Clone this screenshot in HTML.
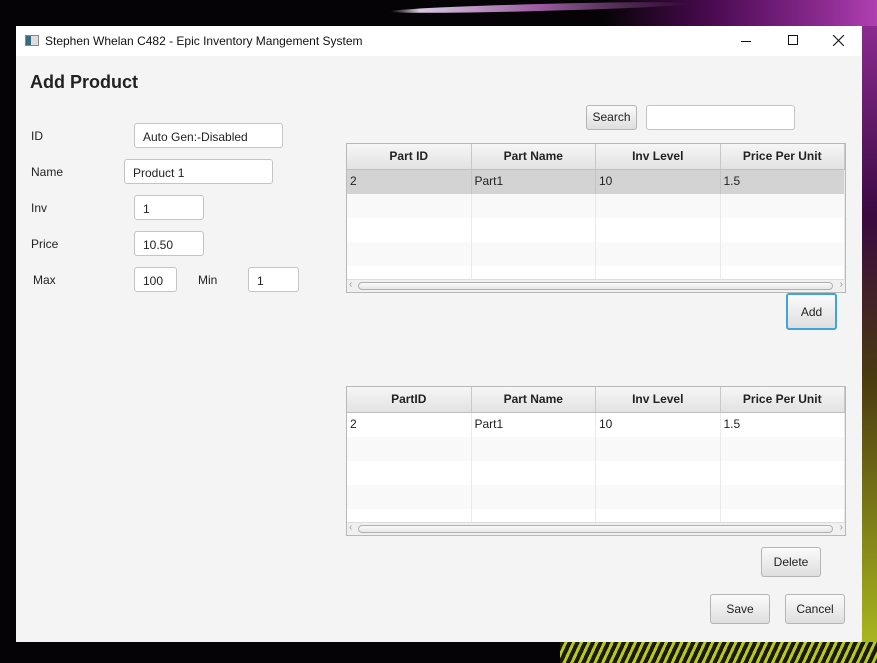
<!DOCTYPE html>
<html><head><style>
*{box-sizing:border-box;margin:0;padding:0}
body{width:877px;height:663px;overflow:hidden;background:#050305;position:relative;font-family:"Liberation Sans",sans-serif;font-size:12px;color:#222}
.bg1{position:absolute;left:390px;top:4px;width:300px;height:7px;background:linear-gradient(90deg,transparent,#d8c8e0 10%,#9a5aa0 50%,transparent);border-radius:50%;transform:rotate(-1.5deg)}
.bg1b{position:absolute;left:600px;top:0;width:277px;height:26px;background:linear-gradient(90deg,transparent,#4a0a50 40%,#8a2a90 80%,#b040b0)}
.bg2{position:absolute;left:862px;top:26px;width:15px;height:637px;background:linear-gradient(180deg,#8a2a90,#3a0a40 30%,#4a3a10 55%,#b0c020)}
.bg3{position:absolute;left:560px;top:642px;width:317px;height:21px;background:repeating-linear-gradient(115deg,#1a1a05 0 4px,#b8c820 4px 7px)}
.win{position:absolute;left:16px;top:26px;width:846px;height:616px;background:#f4f4f4}
.tb{position:absolute;left:0;top:0;width:846px;height:30px;background:#fff;font-size:12px;color:#111}
.abs{position:absolute}
.in{position:absolute;background:#fff;border:1px solid #c4c4c4;border-radius:3px;height:25px;padding:6px 8px;font-size:12px}
.lbl{position:absolute;font-size:12px}
.btn{position:absolute;border:1px solid #b5b5b5;border-radius:3px;background:linear-gradient(#fbfbfb,#dedede);text-align:center;font-size:12px}
.tbl{position:absolute;left:330px;width:500px;height:150px;border:1px solid #b8b8b8;background:#fff;overflow:hidden}
.hd{display:flex;height:26px;background:linear-gradient(#f6f6f6,#e2e2e2);border-bottom:1px solid #c0c0c0}
.hd div{width:125px;border-right:1px solid #c8c8c8;text-align:center;font-weight:bold;line-height:25px;font-size:12px}
.r{display:flex;height:24px}
.r div{width:125px;border-right:1px solid #eaeaea;padding-left:3px;line-height:23px}
.r.alt{background:#f9f9f9}
.sb{position:absolute;left:0;bottom:0;width:100%;height:13px;background:#f0f0f0;border-top:1px solid #ddd}
.sb i{position:absolute;left:11px;right:12px;top:2px;height:8px;border:1px solid #b0b0b0;border-radius:4px;background:linear-gradient(#fafafa,#e6e6e6)}
.sb b{position:absolute;top:-1px;font-weight:normal;color:#999;font-size:10px}
</style></head><body>
<div class="bg1b"></div><div class="bg1"></div><div class="bg2"></div><div class="bg3"></div>
<div class="win">
 <div class="tb">
  <div class="abs" style="left:9px;top:9px;width:14px;height:11px;border:1px solid #888;background:linear-gradient(90deg,#3a6a80 40%,#ddd 40%)"></div>
  <div class="abs" style="left:29px;top:8px">Stephen Whelan C482 - Epic Inventory Mangement System</div>
  <div class="abs" style="left:725px;top:15px;width:10px;height:1px;background:#111"></div>
  <div class="abs" style="left:772px;top:9px;width:10px;height:10px;border:1px solid #111"></div>
  <svg class="abs" style="left:817px;top:9px" width="11" height="11"><path d="M0 0L11 11M11 0L0 11" stroke="#111" stroke-width="1.1"/></svg>
 </div>
 <div class="abs" style="left:14px;top:46px;font-size:18px;font-weight:bold;color:#222">Add Product</div>
 <div class="lbl" style="left:15px;top:103px">ID</div>
 <div class="in" style="left:118px;top:97px;width:149px">Auto Gen:-Disabled</div>
 <div class="lbl" style="left:15px;top:139px">Name</div>
 <div class="in" style="left:108px;top:133px;width:149px">Product 1</div>
 <div class="lbl" style="left:15px;top:175px">Inv</div>
 <div class="in" style="left:118px;top:169px;width:70px">1</div>
 <div class="lbl" style="left:15px;top:211px">Price</div>
 <div class="in" style="left:118px;top:205px;width:70px">10.50</div>
 <div class="lbl" style="left:17px;top:247px">Max</div>
 <div class="in" style="left:118px;top:241px;width:43px">100</div>
 <div class="lbl" style="left:182px;top:247px">Min</div>
 <div class="in" style="left:232px;top:241px;width:51px">1</div>
 <div class="btn" style="left:570px;top:79px;width:51px;height:25px;line-height:23px">Search</div>
 <div class="in" style="left:630px;top:79px;width:149px"></div>
 <div class="tbl" style="top:117px">
  <div class="hd"><div>Part ID</div><div>Part Name</div><div>Inv Level</div><div>Price Per Unit</div></div>
  <div class="r" style="background:#d3d3d3"><div style="border-color:#c4c4c4">2</div><div style="border-color:#c4c4c4">Part1</div><div style="border-color:#c4c4c4">10</div><div>1.5</div></div>
  <div class="r alt"><div></div><div></div><div></div><div></div></div>
  <div class="r"><div></div><div></div><div></div><div></div></div>
  <div class="r alt"><div></div><div></div><div></div><div></div></div>
  <div class="r"><div></div><div></div><div></div><div></div></div>
  <div class="sb"><b style="left:2px">&lsaquo;</b><i></i><b style="right:2px">&rsaquo;</b></div>
 </div>
 <div class="btn" style="left:770px;top:267px;width:51px;height:37px;line-height:35px;border:2px solid #3fa4d8;border-radius:3px">Add</div>
 <div class="tbl" style="top:360px">
  <div class="hd"><div>PartID</div><div>Part Name</div><div>Inv Level</div><div>Price Per Unit</div></div>
  <div class="r"><div>2</div><div>Part1</div><div>10</div><div>1.5</div></div>
  <div class="r alt"><div></div><div></div><div></div><div></div></div>
  <div class="r"><div></div><div></div><div></div><div></div></div>
  <div class="r alt"><div></div><div></div><div></div><div></div></div>
  <div class="r"><div></div><div></div><div></div><div></div></div>
  <div class="sb"><b style="left:2px">&lsaquo;</b><i></i><b style="right:2px">&rsaquo;</b></div>
 </div>
 <div class="btn" style="left:745px;top:521px;width:60px;height:30px;line-height:28px">Delete</div>
 <div class="btn" style="left:694px;top:568px;width:60px;height:30px;line-height:28px">Save</div>
 <div class="btn" style="left:769px;top:568px;width:60px;height:30px;line-height:28px">Cancel</div>
</div>
</body></html>
